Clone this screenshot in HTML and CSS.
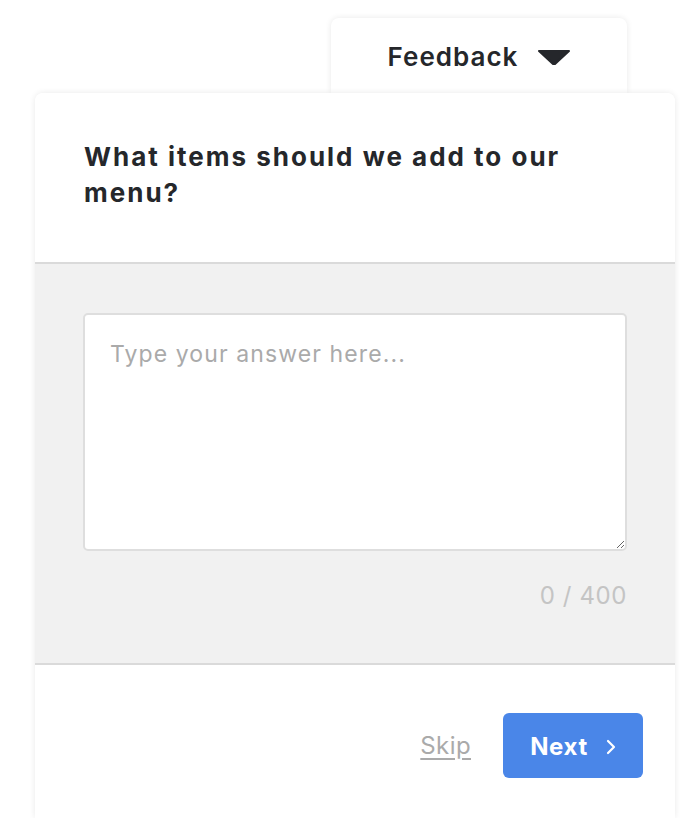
FILE: index.html
```html
<!DOCTYPE html>
<html lang="en">
<head>
  <meta charset="UTF-8">
  <title>Feedback</title>
  <link rel="stylesheet" href="styles.css">
</head>
<body>
  <div class="widget">
    <div class="tab-row">
      <div class="tab">
        <span>Feedback</span>
        <svg class="caret" width="32" height="15" viewBox="0 0 32 15"><polygon points="1,1 31,1 17,14 15,14" fill="#25272b" stroke="#25272b" stroke-width="2" stroke-linejoin="round"/></svg>
      </div>
    </div>
    <div class="panel">
      <div class="panel-head">
        <h2>What items should we add to our menu?</h2>
      </div>
      <div class="panel-body">
        <textarea placeholder="Type your answer here..."></textarea>
        <div class="counter">0 / 400</div>
      </div>
      <div class="panel-foot">
        <a class="skip" href="#">Skip</a>
        <button class="next">Next
          <svg width="10" height="16" viewBox="0 0 10 16"><polyline points="2,2 8,8 2,14" fill="none" stroke="#fff" stroke-width="2.2" stroke-linecap="round" stroke-linejoin="round"/></svg>
        </button>
      </div>
    </div>
  </div>
</body>
</html>
```
FILE: styles.css
```css
body {
  margin: 0;
  background-color: #fff;
  font-family: Inter, "Liberation Sans", sans-serif;
  color: #25272b;
}
.widget {
  width: 640px;
  margin-left: 35px;
  padding-top: 18px;
}
.tab-row {
  display: flex;
  justify-content: flex-end;
  padding-right: 48px;
}
.tab {
  width: 296px;
  height: 75px;
  box-sizing: border-box;
  padding-top: 24px;
  display: flex;
  justify-content: center;
  align-items: flex-start;
  gap: 20px;
  background-color: #fff;
  border-radius: 8px 8px 0 0;
  box-shadow: 0 0 6px rgba(0, 0, 0, 0.09);
  font-size: 26px;
  font-weight: 600;
  line-height: 30px;
  letter-spacing: 1px;
}
.caret {
  margin-top: 8px;
}
.panel {
  position: relative;
  background-color: #fff;
  border-radius: 8px 8px 0 0;
  box-shadow: 0 0 6px rgba(0, 0, 0, 0.09);
  height: 725px;
}
.panel-head {
  padding: 46px 48px 51px 49px;
  border-bottom: 2px solid #dadada;
  background-color: #fff;
  border-radius: 8px 8px 0 0;
}
.panel-head h2 {
  margin: 0;
  font-size: 26px;
  font-weight: 700;
  line-height: 36px;
  letter-spacing: 2px;
}
.panel-body {
  background-color: #f1f1f1;
  padding: 49px 48px 0 48px;
  height: 350px;
  border-bottom: 2px solid #dadada;
}
textarea {
  display: block;
  width: 100%;
  height: 238px;
  box-sizing: border-box;
  padding: 25px 25px;
  border: 2px solid #dedede;
  border-radius: 5px;
  background-color: #fff;
  font-family: Inter, "Liberation Sans", sans-serif;
  font-size: 23px;
  letter-spacing: 1.1px;
  color: #25272b;
}
textarea::placeholder {
  color: #aaaaaa;
}
.counter {
  margin-top: 30px;
  text-align: right;
  font-size: 24px;
  letter-spacing: 0.6px;
  color: #c4c4c4;
}
.panel-foot {
  display: flex;
  justify-content: flex-end;
  align-items: center;
  gap: 32px;
  padding: 48px 32px 0 0;
}
.skip {
  color: #aaaaaa;
  font-size: 24px;
  letter-spacing: 0.4px;
  text-decoration: underline;
  text-underline-offset: 4px;
}
.next {
  width: 140px;
  height: 65px;
  display: flex;
  align-items: center;
  justify-content: center;
  gap: 18px;
  padding-top: 3px;
  border: none;
  border-radius: 6px;
  background-color: #4a86e8;
  color: #fff;
  font-family: Inter, "Liberation Sans", sans-serif;
  font-size: 24px;
  font-weight: 700;
  letter-spacing: 0.6px;
  cursor: pointer;
}
```
